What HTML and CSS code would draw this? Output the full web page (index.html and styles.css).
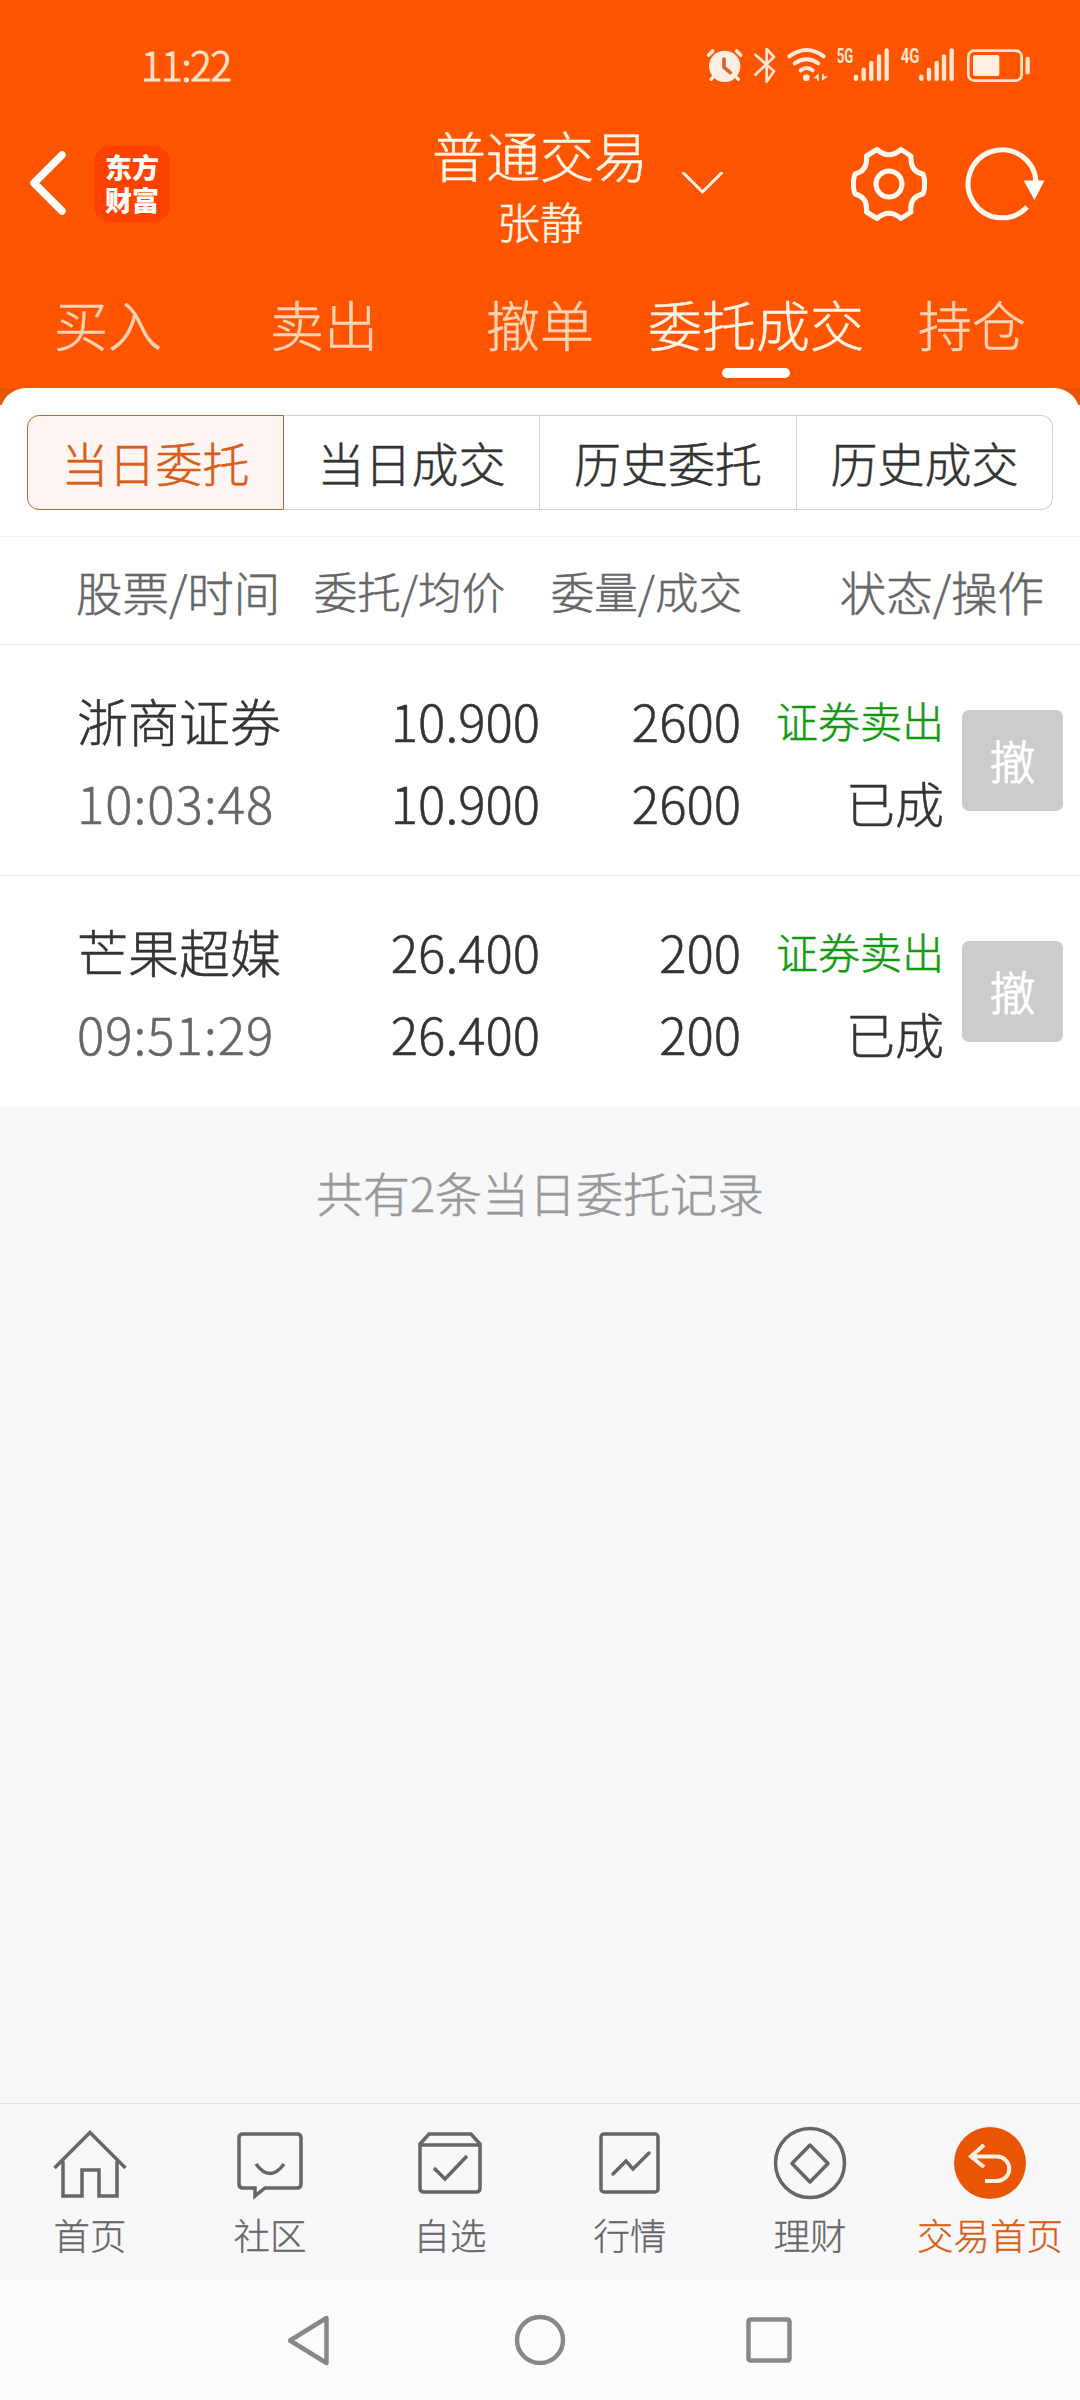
FILE: index.html
```html
<!DOCTYPE html>
<html lang="zh-CN">
<head>
    <meta charset="UTF-8">
    <meta name="viewport" content="width=device-width, initial-scale=1.0">
    <title>普通交易</title>

    <link rel="stylesheet" href="styles.css">
</head>
<body>

<div class="header">
    <div class="status-bar">
        <span class="clock">11:22</span>
        <svg class="status-icons" width="360" height="70" viewBox="0 0 1080 210">
            <!-- alarm -->
            <circle cx="104" cy="109" r="47" fill="#ffeee4"/>
            <path d="M56 76l12-13M152 76l-12-13" stroke="#ffe6d4" stroke-width="11" stroke-linecap="round"/>
            <path d="M72 138l-9 10M136 138l9 10" stroke="#ffeee4" stroke-width="10" stroke-linecap="round"/>
            <path d="M102 87v25l19 16" fill="none" stroke="#d9622a" stroke-width="11" stroke-linecap="round" stroke-linejoin="round"/>
            <!-- bluetooth -->
            <path d="M196 74l56 50-22 31V57l22 24-56 53" fill="none" stroke="#ffe6d4" stroke-width="8" stroke-linecap="round" stroke-linejoin="round"/>
            <!-- wifi -->
            <g fill="none" stroke="#ffe9da" stroke-width="12" stroke-linecap="round">
                <path d="M298 79q52-38 103 0"/>
                <path d="M314 100q36-24 71 0"/>
                <path d="M332 121q18-14 36 0"/>
            </g>
            <circle cx="349" cy="143" r="10" fill="#ffe9da"/>
            <path d="M386 130v22h-5v-7h-11zM396 152v-20h5v7h13z" fill="#ffe9da"/>
            <!-- signal -->
            <g class="net">
                <text x="440" y="98" textLength="50" lengthAdjust="spacingAndGlyphs">5G</text>
                <text x="632" y="98" textLength="56" lengthAdjust="spacingAndGlyphs">4G</text>
            </g>
            <g fill="none" stroke="#ffe6d0" stroke-width="13" stroke-linecap="round">
                <path d="M498 140v7M521 119v28M544 99v48M567 79v68M590 61v86"/>
                <path d="M694 140v7M717 119v28M740 99v48M762 79v68M785 61v86"/>
            </g>
            <!-- battery -->
            <rect x="835" y="62" width="160" height="90" rx="18" fill="none" stroke="#ffe3cc" stroke-width="8"/>
            <rect x="849" y="75" width="79" height="63" rx="6" fill="#ffeee4"/>
            <path d="M1013 87v40" stroke="#ffe3cc" stroke-width="13" stroke-linecap="round"/>
        </svg>
    </div>

    <div class="title-bar">
        <div class="title-left">
            <svg width="38" height="66" viewBox="0 0 38 66">
                <path d="M32 4L4 32l28 28" fill="none" stroke="#fff" stroke-width="7.500" stroke-linecap="round" stroke-linejoin="round"/>
            </svg>
            <div class="logo">
                <div>东方</div>
                <div>财富</div>
            </div>
        </div>
        <div class="title">
            <div class="title-main">普通交易</div>
            <div class="title-sub">张静</div>
        </div>
        <div class="title-right">
            <svg class="arrow" width="42" height="24" viewBox="0 0 42 24">
                <path d="M1.500 1l19 19 19-19" fill="none" stroke="#fff4e8" stroke-width="3" stroke-linecap="round"/>
            </svg>
            <svg class="gear" width="76" height="76" viewBox="0 0 76 76">
                <path d="M26 3.500Q38 14 50 3.500L60 10Q59 26 72 28Q75.500 38 72 48Q58 51 60 66L50 72.500Q38 62 26 72.500L15.500 66Q17 51 4 48Q.5 38 4 28Q17 25 15.500 10Z" fill="none" stroke="#fff8f0" stroke-width="5" stroke-linejoin="round"/>
                <circle cx="38" cy="38" r="13" fill="none" stroke="#fff8f0" stroke-width="5"/>
            </svg>
            <svg class="refresh" width="82" height="76" viewBox="0 0 82 76">
                <path d="M62 61A34 34 0 1 1 71 35" fill="none" stroke="#fff8f0" stroke-width="5"/>
                <path d="M58.500 34.500h21L69.500 54z" fill="#fff"/>
            </svg>
        </div>
    </div>

    <div class="tabs">
        <div class="tab">买入</div>
        <div class="tab">卖出</div>
        <div class="tab">撤单</div>
        <div class="tab active">委托成交</div>
        <div class="tab">持仓</div>
    </div>
</div>

<div class="panel-bg">
    <div class="panel">
        <div class="segments">
            <div class="segment selected">当日委托</div>
            <div class="segment">当日成交</div>
            <div class="segment">历史委托</div>
            <div class="segment">历史成交</div>
        </div>
    </div>
</div>

<div class="grid-row list-head">
    <div class="big">股票/时间</div>
    <div class="right">委托/均价</div>
    <div class="right">委量/成交</div>
    <div class="big right">状态/操作</div>
</div>

<div class="grid-row order">
    <div>
        <p>浙商证券</p>
        <p class="time">10:03:48</p>
    </div>
    <div class="right">
        <p>10.900</p>
        <p>10.900</p>
    </div>
    <div class="right">
        <p>2600</p>
        <p>2600</p>
    </div>
    <div class="right">
        <p class="sell">证券卖出</p>
        <p class="state">已成</p>
    </div>
    <button class="cancel">撤</button>
</div>

<div class="grid-row order last">
    <div>
        <p>芒果超媒</p>
        <p class="time">09:51:29</p>
    </div>
    <div class="right">
        <p>26.400</p>
        <p>26.400</p>
    </div>
    <div class="right">
        <p>200</p>
        <p>200</p>
    </div>
    <div class="right">
        <p class="sell">证券卖出</p>
        <p class="state">已成</p>
    </div>
    <button class="cancel">撤</button>
</div>

<div class="summary">共有2条当日委托记录</div>

<div class="bottom-bar">
    <div class="bottom-item">
        <svg width="80" height="80" viewBox="0 0 80 80">
            <path d="M4.500 45L40 9.500 75.500 45M13 38v35h19V47h17v26h18V38"/>
        </svg>
        <span>首页</span>
    </div>
    <div class="bottom-item">
        <svg width="80" height="80" viewBox="0 0 80 80">
            <path d="M13 11h54q4 0 4 4v46q0 4-4 4H35l-10 8v-8H13q-4 0-4-4V15q0-4 4-4zM26 41q14 19 28 0"/>
        </svg>
        <span>社区</span>
    </div>
    <div class="bottom-item">
        <svg width="80" height="80" viewBox="0 0 80 80">
            <path d="M10 21L19 11h42l9 10v44q0 4-4 4H14q-4 0-4-4zM10 22h60M24 45l11 11 22-23"/>
        </svg>
        <span>自选</span>
    </div>
    <div class="bottom-item">
        <svg width="80" height="80" viewBox="0 0 80 80">
            <rect x="11" y="11" width="57" height="58" rx="3"/>
            <path d="M23 51l13-13 7 8 16-16" stroke-linecap="round"/>
        </svg>
        <span>行情</span>
    </div>
    <div class="bottom-item">
        <svg width="80" height="80" viewBox="0 0 80 80">
            <circle cx="40" cy="40" r="34.500"/>
            <path d="M40 22l18 18.500L40 59 22 40.500z" stroke-linejoin="round"/>
        </svg>
        <span>理财</span>
    </div>
    <div class="bottom-item current">
        <svg width="80" height="80" viewBox="0 0 80 80">
            <circle class="disc" cx="40" cy="40" r="36"/>
            <path class="back" d="M34 22L21 33.500 34 44M21 33.500h26a12 12 0 0 1 0 24.500H35"/>
        </svg>
        <span>交易首页</span>
    </div>
</div>

<div class="nav-bar">
    <svg width="50" height="54" viewBox="0 0 50 54">
        <path d="M41.500 5v45L5 27.500z"/>
    </svg>
    <svg width="54" height="54" viewBox="0 0 54 54">
        <circle cx="27" cy="27" r="23"/>
    </svg>
    <svg width="50" height="54" viewBox="0 0 50 54">
        <rect x="3.500" y="6.500" width="41" height="41" rx="2"/>
    </svg>
</div>

</body>
</html>
```
FILE: styles.css
```css
* {
    box-sizing: border-box;
}
body {
    margin: 0;
    width: 1080px;
    height: 2400px;
    display: flex;
    flex-direction: column;
    background-color: #f7f8fa;
    color: #333;
    font-family: "Noto Sans CJK SC", sans-serif;
    font-weight: 300;
    -webkit-text-stroke: 0.5px;
}
p {
    margin: 0;
}
svg {
    display: block;
}

/* header */
.header {
    height: 388px;
    background-color: #ff5500;
}
.status-bar {
    display: flex;
    justify-content: space-between;
    height: 100px;
    padding: 30px 30px 0 141px;
}
.clock {
    font-size: 40px;
    line-height: 69px;
    letter-spacing: -1.200px;
    color: #ffe3cc;
    -webkit-text-stroke: 1px;
}
.net text {
    font-family: Roboto, sans-serif;
    font-weight: 700;
    font-size: 60px;
    fill: #ffe6d0;
}
.title-bar {
    display: grid;
    grid-template-columns: 400px 280px 400px;
    height: 168px;
}
.title-left {
    display: flex;
    align-items: center;
    padding-left: 30px;
}
.logo {
    width: 76px;
    height: 76px;
    margin-left: 26px;
    padding-top: 4px;
    border-radius: 16px;
    background-color: #ff4200;
    color: #fff;
    font-size: 27px;
    line-height: 33px;
    font-weight: 900;
    text-align: center;
    -webkit-text-stroke: 0;
}
.title {
    padding-top: 22px;
    color: #fff4e8;
    text-align: center;
}
.title-main {
    font-size: 54px;
    line-height: 66px;
}
.title-sub {
    font-size: 43px;
    line-height: 64px;
}
.title-right {
    display: flex;
    align-items: center;
    padding-left: 2px;
}
.gear {
    margin-left: 127px;
}
.refresh {
    margin-left: 38px;
}
.tabs {
    display: grid;
    grid-template-columns: repeat(5, 216px);
    height: 120px;
}
.tab {
    padding-top: 17px;
    font-size: 54px;
    line-height: 78px;
    text-align: center;
    white-space: nowrap;
    color: #ffd3b5;
}
.tab.active {
    color: #fff4e8;
}
.tab.active::after {
    content: "";
    display: block;
    width: 68px;
    height: 10px;
    margin: 5px auto 0;
    border-radius: 5px;
    background-color: #fff;
}

/* white panel with the filter buttons */
.panel-bg {
    background: linear-gradient(#e65500 17px, #fff 17px);
}
.panel {
    height: 148px;
    padding: 27px;
    border-radius: 26px 26px 0 0;
    background-color: #fff;
}
.segments {
    display: grid;
    grid-template-columns: 257px 256px 257px 256px;
    height: 95px;
}
.segment {
    border: 1px solid #cdd2d2;
    border-left: none;
    font-size: 47px;
    line-height: 92px;
    text-align: center;
}
.segment:last-child {
    border-radius: 0 12px 12px 0;
}
.segment.selected {
    border: 1px solid #b5683c;
    border-radius: 12px 0 0 12px;
    background-color: #fff6f3;
    color: #d95d17;
}

/* order list */
.grid-row {
    display: grid;
    grid-template-columns: 265px 198px 201px 203px auto;
    padding-left: 77px;
    background-color: #fff;
}
.right {
    text-align: right;
}
.list-head {
    height: 109px;
    padding-left: 76px;
    border-top: 1px solid #f5f5f5;
    border-bottom: 1px solid #ebebeb;
    grid-template-columns: 230px 199px 237px 302px;
    font-size: 43.500px;
    line-height: 108px;
    color: #666;
}
.big {
    font-size: 46.500px;
}
.order {
    height: 231px;
    padding-top: 34px;
    border-bottom: 1px solid #ebebeb;
    font-size: 51px;
    line-height: 82px;
}
.order.last {
    border-bottom: none;
}
.time {
    letter-spacing: 1px;
    color: #666;
}
.sell {
    font-size: 42px;
    color: #109a10;
}
.state {
    font-size: 49px;
}
.cancel {
    width: 101px;
    height: 101px;
    margin: 31px 0 0 18px;
    padding: 0 0 4px;
    border: none;
    border-radius: 7px;
    background-color: #ccc;
    color: #fff;
    font: inherit;
    font-size: 46px;
    -webkit-text-stroke: 1px;
}
.summary {
    flex: 1;
    padding-top: 46px;
    font-size: 47px;
    line-height: 78px;
    text-align: center;
    color: #999;
}

/* bottom */
.bottom-bar {
    display: grid;
    grid-template-columns: repeat(6, 180px);
    height: 177px;
    border-top: 1px solid #e2e2e4;
    background-color: #f8f8fa;
}
.bottom-item {
    display: flex;
    flex-direction: column;
    align-items: center;
    padding-top: 19px;
    font-size: 36.500px;
    line-height: 64px;
    white-space: nowrap;
    color: #666;
    -webkit-text-stroke: 0.300px;
}
.bottom-item svg {
    fill: none;
    stroke: #666;
    stroke-width: 3.500;
}
.current {
    color: #d95d17;
}
.current .disc {
    fill: #e95504;
    stroke: none;
}
.current .back {
    stroke: #fff0e0;
    stroke-width: 4;
}
.nav-bar {
    display: flex;
    justify-content: space-between;
    height: 120px;
    padding: 33px 285px 0;
    background-color: #fcfcfc;
}
.nav-bar svg {
    fill: none;
    stroke: #888;
    stroke-width: 4.500;
    stroke-linejoin: round;
}
```
